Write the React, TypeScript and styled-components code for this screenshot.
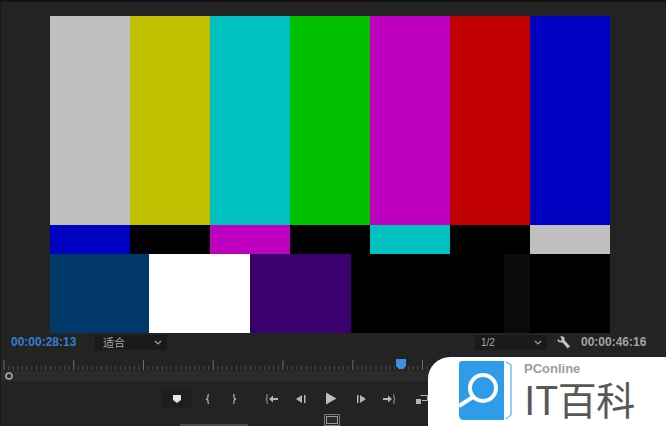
import * as React from 'react';
import styled, { createGlobalStyle } from 'styled-components';

const GlobalStyle = createGlobalStyle`
  html, body {
    margin: 0;
    padding: 0;
    background: #232323;
  }
`;

const Frame = styled.div`
  width: 666px;
  height: 426px;
  box-sizing: border-box;
  position: relative;
  overflow: hidden;
  background: #232323;
  border-top: 2px solid #141414;
  border-left: 1px solid #191919;
  font-family: 'Liberation Sans', Arial, sans-serif;
  display: flex;
  flex-direction: column;
`;

const Screen = styled.div`
  width: 560px;
  height: 317px;
  margin: 14px 0 0 49px;
  display: flex;
  flex-direction: column;
  background: #000;
`;

const BarRow = styled.div<{ $h: number }>`
  display: flex;
  height: ${p => p.$h}px;
`;

const Bar = styled.div<{ $c: string; $w: number }>`
  width: ${p => p.$w}px;
  background: ${p => p.$c};
`;

const StatusRow = styled.div`
  height: 20px;
  display: flex;
  align-items: center;
  padding-left: 10px;
`;

const CurrentTime = styled.div`
  width: 84px;
  font-size: 12px;
  font-weight: bold;
  color: #2f80d6;
`;

const Select = styled.div<{ $w: number }>`
  width: ${p => p.$w}px;
  height: 15px;
  box-sizing: border-box;
  background: #1a1a1a;
  display: flex;
  align-items: center;
  justify-content: space-between;
  padding: 0 5px 0 6px;
  font-size: 10px;
  color: #a6a6a6;
`;

const FitLabel = styled.span`
  font-family: 'Noto Sans CJK SC', sans-serif;
  font-size: 11px;
  margin-left: 2px;
`;

const Spacer = styled.div<{ $w: number }>`
  width: ${p => p.$w}px;
  flex: none;
`;

const Wrench = styled.svg`
  width: 15px;
  height: 15px;
  margin: 0 10px 0 9px;
`;

const TotalTime = styled.div`
  font-size: 12px;
  font-weight: bold;
  color: #a3a3a3;
`;

const Ruler = styled.div`
  height: 29px;
  margin-top: 5px;
  position: relative;
`;

const Band = styled.div`
  position: absolute;
  left: 0;
  right: 0;
  top: 14px;
  height: 10px;
  background: #2b2b2b;
`;

const Ticks = styled.svg`
  position: absolute;
  left: 0;
  top: 0;
`;

const Controls = styled.div`
  height: 26px;
  margin-top: 2px;
  position: relative;
  display: flex;
  align-items: center;
`;

const CtrlButton = styled.div<{ $w: number; $active?: boolean }>`
  width: ${p => p.$w}px;
  height: 20px;
  flex: none;
  display: flex;
  align-items: center;
  justify-content: center;
  background: ${p => (p.$active ? '#1e1e1e' : 'transparent')};
`;

const Footer = styled.div`
  flex: 1;
  position: relative;
  display: flex;
  justify-content: center;
`;

const SafeIcon = styled.svg`
  width: 16px;
  height: 12px;
  margin-top: 3px;
  margin-right: 4px;
`;

const ScrollLine = styled.div`
  position: absolute;
  left: 179px;
  bottom: 0;
  width: 68px;
  height: 2px;
  background: #4a4a4a;
`;

const Logo = styled.div`
  position: absolute;
  right: 0;
  bottom: 0;
  width: 238px;
  height: 69px;
  background: #fff;
  border-top-left-radius: 22px;
  display: flex;
`;

const LogoMark = styled.svg`
  width: 60px;
  height: 69px;
  margin-left: 28px;
  flex: none;
`;

const LogoText = styled.div`
  margin-left: 8px;
  display: flex;
  flex-direction: column;
`;

const Brand = styled.div`
  font-size: 13px;
  font-weight: bold;
  color: #9c9c9c;
  line-height: 13px;
  margin-top: 5px;
`;

const Title = styled.div`
  font-family: 'Noto Sans CJK SC', 'Noto Sans', sans-serif;
  font-size: 39px;
  line-height: 44px;
  color: #585858;
  white-space: nowrap;
  margin-top: 1px;
  letter-spacing: -0.5px;
`;

const top = ['#bfbfbf', '#c0c000', '#00c0c0', '#00c000', '#c000c0', '#c00000', '#0000c0'];
const mid = ['#0000c0', '#000', '#c000c0', '#000', '#00c0c0', '#000', '#bfbfbf'];
const bottom: [string, number][] = [
  ['#00396a', 99],
  ['#fff', 101],
  ['#3a006e', 101],
  ['#000', 153],
  ['#0b0b0b', 26],
  ['#000', 80],
];

const Ic = ({ d, fill = true }: { d: string; fill?: boolean }) => (
  <svg width={14} height={12} viewBox="0 0 14 12">
    <path d={d} fill={fill ? '#b5b5b5' : 'none'} stroke="#b5b5b5" strokeWidth={fill ? 0 : 1.2} />
  </svg>
);

const Chevron = () => (
  <svg width="8" height="5" viewBox="0 0 8 5">
    <path d="M1 1l3 3 3-3" fill="none" stroke="#9a9a9a" strokeWidth="1.2" />
  </svg>
);

const ticks = Array.from({ length: 133 }, (_, i) => i);

export default function App() {
  return (
    <Frame>
      <GlobalStyle />
      <Screen>
        <BarRow $h={209}>
          {top.map((c, i) => <Bar key={i} $c={c} $w={80} />)}
        </BarRow>
        <BarRow $h={29}>
          {mid.map((c, i) => <Bar key={i} $c={c} $w={80} />)}
        </BarRow>
        <BarRow $h={79}>
          {bottom.map(([c, w], i) => <Bar key={i} $c={c} $w={w} />)}
        </BarRow>
      </Screen>

      <StatusRow>
        <CurrentTime>00:00:28:13</CurrentTime>
        <Select $w={72}>
          <FitLabel>适合</FitLabel>
          <Chevron />
        </Select>
        <Spacer $w={308} />
        <Select $w={72}>
          <span>1/2</span>
          <Chevron />
        </Select>
        <Wrench viewBox="0 0 14 14">
          <path d="M1.500 3.500 4 5.500 5.500 4.500 4 1.500C6 0.500 8 1.500 8 4L8 5 13 10.500 11 12.500 6 7 4.500 7C2.500 7 1 5.500 1.500 3.500Z" fill="#c4c4c4" />
        </Wrench>
        <TotalTime>00:00:46:16</TotalTime>
      </StatusRow>

      <Ruler>
        <Band />
        <Ticks width="665" height="29" viewBox="0 0 665 29">
          {ticks.map(i => {
            const x = 3 + i * 4.65;
            const major = i % 15 === 0;
            return <line key={i} x1={x} x2={x} y1={major ? 3 : 9} y2={13} stroke={major ? '#6a6a6a' : '#4c4c4c'} />;
          })}
          <circle cx="8" cy="19" r="3" fill="none" stroke="#a8a8a8" strokeWidth="1.6" />
          <path d="M395 2h10v7l-3 3h-4l-3-3Z" fill="#3f8fe0" />
        </Ticks>
      </Ruler>

      <Controls>
        <Spacer $w={161} />
        <CtrlButton $w={30} $active>
          <svg width="10" height="10" viewBox="0 0 10 10"><path d="M1 1h8v5L5 9 1 6Z" fill="#e4e4e4" /></svg>
        </CtrlButton>
        <CtrlButton $w={31}><Ic fill={false} d="M8 1.500C6.500 1.500 7 3 7 4.500S6.500 6 5.500 6 7 6.500 7 7.500 6.500 10.500 8 10.500" /></CtrlButton>
        <CtrlButton $w={21}><Ic fill={false} d="M6 1.500C7.500 1.500 7 3 7 4.500S7.500 6 8.500 6 7 6.500 7 7.500 7.500 10.500 6 10.500" /></CtrlButton>
        <Spacer $w={9} />
        <CtrlButton $w={38}>
          <svg width="14" height="12" viewBox="0 0 14 12">
            <path d="M2.500 1.500C1.500 1.500 2 3 2 4.500S1.500 6 1 6 2 6.500 2 7.500 1.500 10.500 2.500 10.500" fill="none" stroke="#b5b5b5" />
            <path d="M4 6 8 2.500V5H13V7H8V9.500Z" fill="#b5b5b5" />
          </svg>
        </CtrlButton>
        <CtrlButton $w={20}><Ic d="M2 6 8 2V10ZM10 2H11.500V10H10Z" /></CtrlButton>
        <CtrlButton $w={39}>
          <svg width="12" height="13" viewBox="0 0 12 13"><path d="M1 0.500 11.500 6.500 1 12.500Z" fill="#bdbdbd" /></svg>
        </CtrlButton>
        <CtrlButton $w={21}><Ic d="M3 2H4.500V10H3ZM6 2 12 6 6 10Z" /></CtrlButton>
        <CtrlButton $w={36}>
          <svg width="14" height="12" viewBox="0 0 14 12">
            <path d="M11.500 1.500C12.500 1.500 12 3 12 4.500S12.500 6 13 6 12 6.500 12 7.500 12.500 10.500 11.500 10.500" fill="none" stroke="#b5b5b5" />
            <path d="M10 6 6 2.500V5H1V7H6V9.500Z" fill="#b5b5b5" />
          </svg>
        </CtrlButton>
        <CtrlButton $w={30}>
          <svg width="14" height="12" viewBox="0 0 14 12">
            <path d="M1 6H6V11H1Z" fill="#b5b5b5" />
            <path d="M5.500 2.500H12.500V7.500H7" fill="none" stroke="#b5b5b5" />
          </svg>
        </CtrlButton>
      </Controls>

      <Footer>
        <SafeIcon viewBox="0 0 16 12">
          <rect x="0.500" y="0.500" width="15" height="11" fill="none" stroke="#7a7a7a" />
          <rect x="2.500" y="2.500" width="11" height="7" fill="#2c2c2c" stroke="#9a9a9a" />
        </SafeIcon>
        <ScrollLine />
      </Footer>

      <Logo>
        <LogoMark viewBox="0 0 60 69">
          <path d="M6 4H48V63H8Q3 63 3 58V7Q3 4 6 4Z" fill="#2e9ce8" />
          <path d="M50 5 55 8V58L50 62" fill="none" stroke="#2e9ce8" />
          <circle cx="27" cy="31" r="13" fill="none" stroke="#fff" strokeWidth="4" />
          <path d="M17 40 3 49" stroke="#fff" strokeWidth="4" />
        </LogoMark>
        <LogoText>
          <Brand>PConline</Brand>
          <Title>IT百科</Title>
        </LogoText>
      </Logo>
    </Frame>
  );
}
